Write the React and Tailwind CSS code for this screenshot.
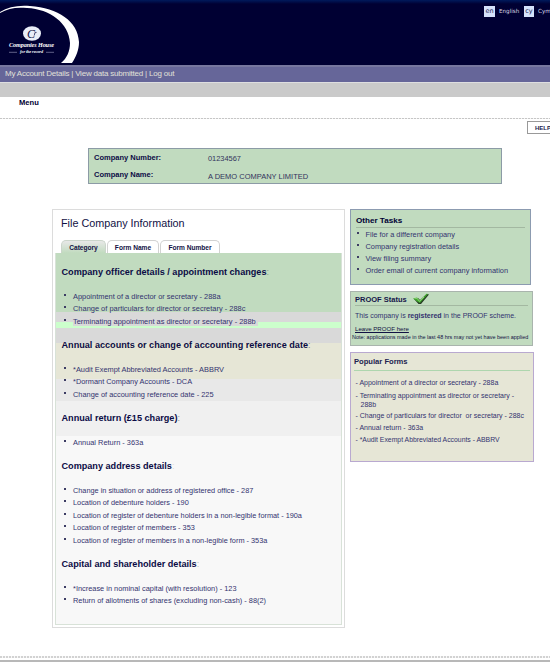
const groups = [
  { title: 'Company officer details / appointment changes', size: 'text-[7.45px]', mark: 'text-[#8a9a8a]', items: ['Appointment of a director or secretary - 288a', 'Change of particulars for director or secretary - 288c', 'Terminating appointment as director or secretary - 288b'] },
  { title: 'Annual accounts or change of accounting reference date', size: 'text-[7.4px]', mark: 'text-[#888]', items: ['*Audit Exempt Abbreviated Accounts - ABBRV', '*Dormant Company Accounts - DCA', 'Change of accounting reference date - 225'] },
  { title: 'Annual return (£15 charge)', size: 'text-[7.4px]', mark: 'text-[#999]', items: ['Annual Return - 363a'] },
  { title: 'Company address details', size: 'text-[7.34px]', mark: 'text-[#dcdcdc]', items: ['Change in situation or address of registered office - 287', 'Location of debenture holders - 190', 'Location of register of debenture holders in a non-legible format - 190a', 'Location of register of members - 353', 'Location of register of members in a non-legible form - 353a'] },
  { title: 'Capital and shareholder details', size: 'text-[7.4px]', mark: 'text-[#bbb]', items: ['*Increase in nominal capital (with resolution) - 123', 'Return of allotments of shares (excluding non-cash) - 88(2)'] },
];

function Logo() {
  return (
    <svg className="block h-[65px] w-[90px]" viewBox="0 0 90 65">
      <path d="M0 12C8 7 18 5 30 6C58 8 78 21 79 42C79 50 76 57 72 63H61C67 58 70 51 70 43C69 23 50 9 27 8C17 7 8 8 0 13Z" fill="#fff" />
      <ellipse cx="32" cy="33.5" rx="9" ry="7.3" fill="#e9edf8" />
      <text x="27" y="38" fontFamily="Liberation Serif, serif" fontStyle="italic" fontSize="12" fill="#111144">C</text>
      <path d="M34.2 35.5L35.2 32.2M34.8 33.3Q35.6 32 36.6 32.4" stroke="#111144" strokeWidth=".7" fill="none" />
      <text x="9" y="46.8" textLength="45" fontFamily="Liberation Serif, serif" fontStyle="italic" fontWeight="bold" fontSize="6.2" fill="#fff">Companies House</text>
      <text x="20" y="53.2" textLength="23" fontFamily="Liberation Serif, serif" fontStyle="italic" fontWeight="bold" fontSize="4.2" fill="#fff">for the record</text>
      <path d="M9 52.3H17M46 52.3H54" stroke="#8a8aad" strokeWidth=".7" />
    </svg>
  );
}

function Tick() {
  return (
    <svg className="block h-[12px] w-[17px]" viewBox="0 0 17 12">
      <path d="M1 6L5 5L7 7L14 1L16 1.5L8 11L5.5 11Z" fill="#263b25" />
      <path d="M0 5.5L4 4.5L7 7.5L13.5 .8L15 1L7 10L5 9Z" fill="#3fa62c" />
      <path d="M1.5 5.3L4 5.2L6.5 8.3L11 4" stroke="#a6e28f" strokeWidth=".8" fill="none" />
    </svg>
  );
}

export default function App() {
  return (
    <div className="h-[669px] w-[550px] overflow-hidden bg-white font-['Liberation_Sans',Arial,sans-serif] text-[7.4px] text-[#33336f]">
      <header className="flex h-[65px] justify-between bg-[#000033] bg-[linear-gradient(#001a5c,#000033_4px)]">
        <Logo />
        <div className="mt-[6px] flex h-[11px] w-[66px] shrink-0 items-center font-['DejaVu_Sans',sans-serif] text-[5.6px] leading-[11px] whitespace-nowrap text-[#d8d8e6]">
          <span className="h-[11px] w-[11px] shrink-0 bg-[#d5e2fb] text-center text-[6.5px] leading-[10px] text-[#22224f]">en</span>
          <span className="ml-[4px] w-[25px] shrink-0 text-[5.6px]">English</span>
          <span className="h-[11px] w-[10px] shrink-0 bg-[#d5e2fb] text-center text-[6.5px] leading-[10px] text-[#22224f]">cy</span>
          <span className="ml-[4px] shrink-0">Cymraeg</span>
        </div>
      </header>
      <nav className="h-[17px] border-t-2 border-[#77779f] bg-[#666699] pl-[5px] text-[8px] leading-[13px] tracking-[-0.21px] whitespace-nowrap text-[#e0e0d8]">
        My Account Details | View data submitted | Log out
      </nav>
      <div className="h-[15px] border-t border-[#dedee0] bg-[#cacaca]" />
      <div className="flex h-[21px] pl-[19px] text-[7.6px] leading-[11px] font-bold text-[#000033]">Menu</div>
      <div className="h-px bg-[repeating-linear-gradient(90deg,#c6c6c6_0_2px,#f4f4f4_2px_3px)]" />
      <div className="mt-[2px] flex h-[27px] justify-end">
        <div className="h-[13px] w-[23px] shrink-0 border border-r-0 border-[#999] pl-[7px] text-[6px] leading-[12px] font-bold whitespace-nowrap text-[#22224f]">HELP</div>
      </div>

      <section className="ml-[88px] h-[36px] w-[414px] border border-[#8c9ba6] bg-[#c1dbbf] pl-[5px] text-[#33335c]">
        <div className="flex h-[17px] leading-[18px]"><b className="w-[114px] text-[7.5px] text-[#0b0b45]">Company Number:</b><span className="pt-px">01234567</span></div>
        <div className="flex h-[17px] leading-[18px]"><b className="w-[114px] text-[7.5px] text-[#0b0b45]">Company Name:</b><span className="pt-[2px] text-[7.5px]">A DEMO COMPANY LIMITED</span></div>
      </section>

      <main className="mt-[25px] ml-[52px] flex h-[447px] items-start">
        <section className="h-[419px] w-[293px] border border-[#dcdcdc] px-[2px] pb-[2px]">
          <h1 className="h-[30px] pl-[6px] text-[10.8px] leading-[26px] text-[#111144]">File Company Information</h1>
          <div className="flex h-[13px] pl-[6px] text-center text-[6.6px] leading-[13px] font-bold text-[#111144]">
            <span className="w-[45px] rounded-t-[5px] border border-b-0 border-[#cbd5cb] bg-gradient-to-b from-[#e8e8e8] to-[#c1dbbf]">Category</span>
            <span className="ml-px w-[52px] rounded-t-[5px] border border-b-0 border-[#d2d2d2]">Form Name</span>
            <span className="ml-px w-[60px] rounded-t-[5px] border border-b-0 border-[#d2d2d2]">Form Number</span>
          </div>
          <div className="h-[372px] border border-t-0 border-[#d8e2d8] bg-[linear-gradient(#c1dbbf_0_59px,#d9d9d9_59px_90px,#e6e6d6_90px_126px,#e8e8e8_126px_148px,#f0f0f0_148px_183px,#f8f8f8_183px)] pt-[2px]">
            {groups.map((g, gi) => (
              <div key={g.title}>
                <h2 className="flex h-[35.5px] items-center pl-[5.5px] text-[9.12px] whitespace-nowrap text-[#0b0b45]"><b>{g.title}</b><span className={g.mark}>:</span></h2>
                <ul className={g.size}>
                  {g.items.map((t, i) => (
                    <li key={t} className={gi === 0 && i === 2 ? 'flex h-[12.5px] bg-[linear-gradient(#d9d9d9_0_6px,#ccffcc_6px)] pl-[8px] leading-[12.5px]' : 'flex h-[12.5px] pl-[8px] leading-[12.5px]'}>
                      <i className="mt-[3px] mr-[7px] h-[2px] w-[2px] bg-[#3c3c63]" />
                      <span className={gi === 0 && i === 2 ? 'h-[10px] bg-[#d9d9d9] pr-[2px] whitespace-nowrap' : 'whitespace-nowrap'}>{t}</span>
                    </li>
                  ))}
                </ul>
              </div>
            ))}
          </div>
        </section>

        <aside className="ml-[5px] w-[184px] whitespace-nowrap">
          <section className="h-[76px] w-[181px] border border-[#8c9bb0] bg-[#c1dbbf] px-[5px] pt-[3px]">
            <h3 className="h-[15px] border-b border-[#a3b8a1] text-[8.1px] leading-[16px] font-bold text-[#000033]">Other Tasks</h3>
            {['File for a different company', 'Company registration details', 'View filing summary', 'Order email of current company information'].map((t) => (
              <div key={t} className="flex h-[12px] leading-[13px]"><i className="mt-[4px] mr-[6.5px] ml-px h-[2px] w-[2px] bg-[#3c3c63]" />{t}</div>
            ))}
          </section>
          <section className="mt-[6px] h-[55px] w-[183px] border border-[#a9b4ad] bg-[#c1dbbf] pt-px">
            <h3 className="mx-[4px] flex h-[13px] border-b border-[#a3b8a1] text-[7.5px] leading-[13px] font-bold text-[#16164a]"><span className="w-[58px]">PROOF Status</span><Tick /></h3>
            <p className="h-[18px] pl-[4px] text-[7.02px] leading-[20px]">This company is <b>registered</b> in the PROOF scheme.</p>
            <p className="h-[9px] pl-[4px] text-[6.1px] leading-[9px] text-[#111144] underline">Leave PROOF here</p>
            <p className="pl-px text-[5.47px] leading-[9px] text-[#111144]">Note: applications made in the last 48 hrs may not yet have been applied</p>
          </section>
          <section className="mt-[6px] h-[110px] w-[184px] border border-[#b9a9d0] bg-[#e6e6d6]">
            <h3 className="mx-[3px] h-[18px] border-b border-[#aed6ae] text-[7.6px] leading-[18px] font-bold text-[#22224f]">Popular Forms</h3>
            <div className="pt-[5px] pl-[4.5px] text-[7px]">
              <p className="h-[13px] leading-[13px]">- Appointment of a director or secretary - 288a</p>
              <p className="h-[20px] pt-[2px] leading-[9px]">- Terminating appointment as director or secretary -<br /><span className="pl-[5px]">288b</span></p>
              <p className="h-[13px] leading-[13px]">- Change of particulars for director&nbsp; or secretary - 288c</p>
              <p className="h-[12px] leading-[12px]">- Annual return - 363a</p>
              <p className="h-[12px] text-[6.85px] leading-[12px]">- *Audit Exempt Abbreviated Accounts - ABBRV</p>
            </div>
          </section>
        </aside>
      </main>
      <div className="h-[2px] bg-[repeating-linear-gradient(90deg,#d2d2d2_0_2px,#f8f8f8_2px_3px)]" />
      <div className="mt-[2px] h-[2px] bg-[#b8b8b8]" />
    </div>
  );
}
